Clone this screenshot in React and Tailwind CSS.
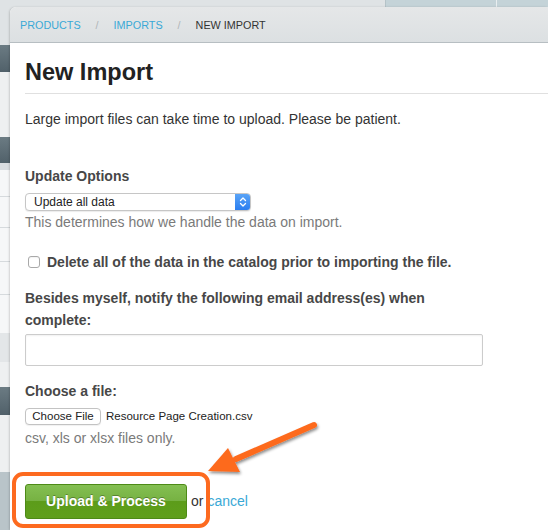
import React from 'react';

const font = { fontFamily: '"Liberation Sans", Arial, Helvetica, sans-serif' };

function BackgroundStrip() {
    // page behind the modal, only a thin slice is visible on the left
    return (
        <div className="w-[10px] flex flex-col shrink-0">
            <div className="h-[38px] bg-[#dfe3e5]" />
            <div className="h-[27px] bg-[linear-gradient(to_bottom,#6b7b83,#51616a)]" />
            <div className="h-[65px] bg-[#eef0f1]" />
            <div className="h-[26px] bg-[linear-gradient(to_bottom,#6b7b83,#51616a)]" />
            <div className="h-[7px] bg-[#d9dde0]" />
            <div className="h-[27px] bg-[#f6f7f8] border-b border-[#d6dadd]" />
            <div className="h-[31px] bg-[#f6f7f8] border-b border-[#d6dadd]" />
            <div className="h-[34px] bg-[#f6f7f8] border-b border-[#d6dadd]" />
            <div className="h-[33px] bg-[#f6f7f8] border-b border-[#d6dadd]" />
            <div className="h-[38px] bg-[#f6f7f8]" />
            <div className="h-[29px] bg-[#e3e6e8]" />
            <div className="h-[25px] bg-[#eef0f1]" />
            <div className="h-[28px] bg-[linear-gradient(to_bottom,#6b7b83,#51616a)]" />
            <div className="h-[57px] bg-[#eef0f1]" />
            <div className="flex-1 bg-[#b9c4c9]" />
        </div>
    );
}

function FakeSelect() {
    return (
        <div className="mt-[7px] w-[226px] h-[18px] flex items-stretch rounded-[4px] border border-[#c6c6c6] bg-white shadow-[0_1px_1px_rgba(0,0,0,0.08)] overflow-hidden">
            <div className="flex-1 pl-[8px] text-[12px] leading-[16px] text-[#222]">Update all data</div>
            <div className="w-[15px] bg-[linear-gradient(to_bottom,#5aa4f7,#2b7ef0)] flex items-center justify-center">
                <svg width="8" height="12" viewBox="0 0 8 12" fill="none" stroke="white" strokeWidth="1.3" strokeLinecap="round" strokeLinejoin="round">
                    <path d="M1.5 4.5 L4 2 L6.5 4.5" />
                    <path d="M1.5 7.5 L4 10 L6.5 7.5" />
                </svg>
            </div>
        </div>
    );
}

function Annotation() {
    return (
        <svg className="absolute inset-0 pointer-events-none" width="548" height="530" viewBox="0 0 548 530">
            <defs>
                <filter id="arrowShadow" x="-20%" y="-20%" width="140%" height="160%">
                    <feDropShadow dx="1" dy="2" stdDeviation="1.5" floodColor="#000" floodOpacity="0.45" />
                </filter>
            </defs>
            <rect x="14" y="474" width="194" height="52" rx="9" fill="none" stroke="#fd6a1f" strokeWidth="4" />
            <g filter="url(#arrowShadow)">
                <path d="M314 425 L236 459" stroke="#fd6a1f" strokeWidth="6" strokeLinecap="round" />
                <polygon points="208,471 228,448 240,472" fill="#fd6a1f" />
            </g>
        </svg>
    );
}

export default function App() {
    return (
        <div className="relative w-[548px] h-[530px] overflow-hidden bg-[#dfe3e5] flex flex-col" style={font}>
            <div className="h-[7px] flex shrink-0">
                <div className="w-[385px] bg-[#dfe3e5]" />
                <div className="w-[111px] bg-[#c4d3d8] border-l border-[#b5c3c8]" />
                <div className="flex-1 bg-[#c4d3d8] border-l border-[#e9eef0]" />
            </div>
            <div className="flex flex-1 min-h-0">
                <BackgroundStrip />
                <div className="flex-1 bg-white rounded-tl-[6px] shadow-[-1px_0_2px_rgba(0,0,0,0.15)] flex flex-col overflow-hidden">
                    <div className="h-[36px] shrink-0 bg-[linear-gradient(to_bottom,#e5e7e8,#dce0e2)] border-b border-[#b7bec2] flex items-center pl-[10px] pt-[2px] text-[10.8px]">
                        <span className="text-[#3aa9d6]">PRODUCTS</span>
                        <span className="text-[#b0b5b8] px-[15px]">/</span>
                        <span className="text-[#3aa9d6]">IMPORTS</span>
                        <span className="text-[#b0b5b8] px-[15px]">/</span>
                        <span className="text-[#333]">NEW IMPORT</span>
                    </div>

                    <div className="pl-[15px] flex flex-col">
                        <h1 className="mt-[15px] text-[23.5px] leading-[28px] font-bold text-[#222]">New Import</h1>
                        <div className="mt-[7px] h-px bg-[#e0e0e0]" />
                        <p className="mt-[15px] text-[14px] leading-[20px] text-[#333]">
                            Large import files can take time to upload. Please be patient.
                        </p>

                        <div className="mt-[37px] text-[14px] leading-[20px] font-bold text-[#474747]">Update Options</div>
                        <FakeSelect />
                        <div className="mt-[1px] text-[14px] leading-[20px] text-[#7a7a7a]">
                            This determines how we handle the data on import.
                        </div>

                        <div className="mt-[20px] flex items-center h-[20px]">
                            <div className="ml-[3px] w-[12px] h-[12px] rounded-[3px] border border-[#a9a9a9] bg-white shadow-[inset_0_1px_1px_rgba(0,0,0,0.05)]" />
                            <span className="ml-[7px] text-[14px] font-bold text-[#474747]">
                                Delete all of the data in the catalog prior to importing the file.
                            </span>
                        </div>

                        <div className="mt-[15px] w-[440px] text-[14px] leading-[22px] font-bold text-[#474747]">
                            Besides myself, notify the following email address(es) when complete:
                        </div>
                        <div className="mt-[3px] w-[458px] h-[32px] border border-[#cccccc] rounded-[2px] bg-white shadow-[inset_0_1px_2px_rgba(0,0,0,0.06)]" />

                        <div className="mt-[15px] text-[14px] leading-[20px] font-bold text-[#474747]">Choose a file:</div>
                        <div className="mt-[7px] flex items-center h-[17px]">
                            <div className="w-[76px] h-[17px] flex items-center justify-center rounded-[4px] border border-[#c3c3c3] bg-white text-[11.5px] text-[#222] shadow-[0_1px_1px_rgba(0,0,0,0.06)]">
                                Choose File
                            </div>
                            <span className="ml-[5px] text-[11.5px] text-[#222]">Resource Page Creation.csv</span>
                        </div>
                        <div className="mt-[3px] text-[14px] leading-[20px] text-[#7a7a7a]">csv, xls or xlsx files only.</div>

                        <div className="mt-[36px] flex items-center">
                            <button className="w-[162px] h-[35px] rounded-[3px] border border-[#4d8a17] bg-[linear-gradient(to_bottom,#84bf52_0%,#76b142_50%,#5c9c1a_50%,#5f9f1c_100%)] text-white text-[14px] font-bold [text-shadow:0_-1px_0_rgba(0,0,0,0.3)]">
                                Upload &amp; Process
                            </button>
                            <span className="ml-[4px] text-[14px] text-[#333]">or</span>
                            <a className="ml-[4px] text-[14px] text-[#3aa9d6]" href="#">cancel</a>
                        </div>
                    </div>
                </div>
            </div>
            <Annotation />
        </div>
    );
}
